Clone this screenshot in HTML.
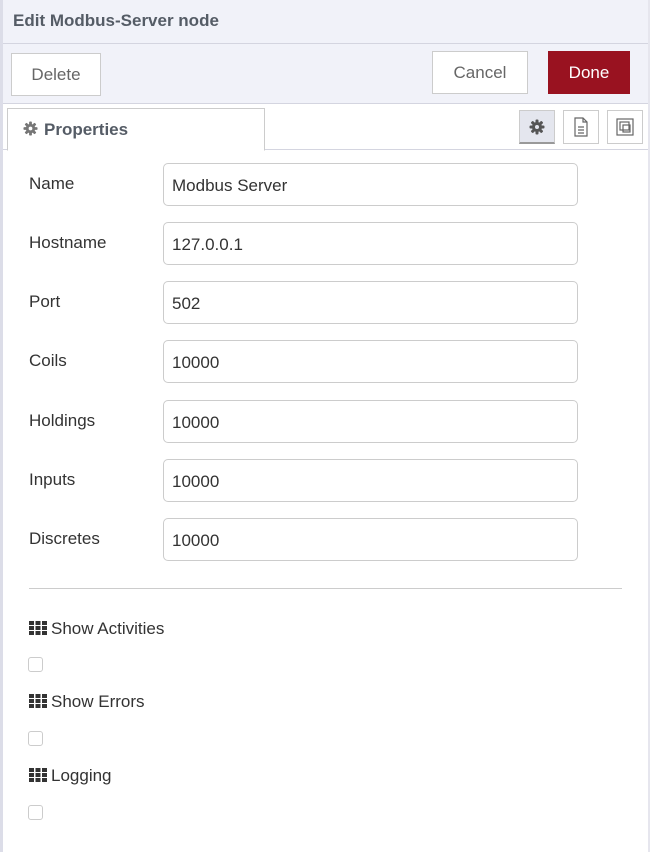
<!DOCTYPE html>
<html><head><style>
*{box-sizing:border-box;margin:0;padding:0}
body{width:650px;height:852px;background:#fff;font-family:"Liberation Sans",sans-serif;color:#333;position:relative;overflow:hidden}
.frame{position:absolute;left:0;top:0;width:650px;height:852px;border-left:3px solid #dcdde8;border-right:2px solid #e6e6ee;z-index:5;pointer-events:none}
.hdr{position:absolute;left:3px;right:2px;top:0;height:44px;background:#f1f2f9;border-bottom:1px solid #d4d5e0;font-weight:bold;font-size:17px;color:#555c66;padding:11px 0 0 10px}
.bar{position:absolute;left:3px;right:2px;top:44px;height:60px;background:#f1f2f9;border-bottom:1px solid #d4d5e0}
.btn{position:absolute;height:43px;border:1px solid #ccc;background:#fff;color:#666;font-size:17px;text-align:center;line-height:41px}
.tabs{position:absolute;left:3px;right:2px;top:104px;height:46px;background:#fff;border-bottom:1px solid #d4d5e0}
.tab{position:absolute;left:7px;top:108px;width:258px;height:43px;border:1px solid #ccc;border-bottom:1px solid #fff;background:#fff;font-weight:bold;font-size:17px;color:#555c66;padding:11px 0 0 15px}
.ib{position:absolute;top:6px;width:36px;height:34px;border:1px solid #ccc;background:#fff}
.lbl{position:absolute;left:29px;font-size:17px;color:#333}
.inp{position:absolute;left:163px;width:415px;height:43px;border:1px solid #ccc;border-radius:5px;font-size:17px;padding:12px 0 0 8px;color:#333}
.hr{position:absolute;left:29px;width:593px;top:588px;border-top:1px solid #ccc}
.cb{position:absolute;left:28px;width:15px;height:15px;border:1px solid #ccc;border-radius:3px}
</style></head><body>
<div class="frame"></div>
<div class="hdr">Edit Modbus-Server node</div>
<div class="bar"></div>
<div class="btn" style="left:11px;top:53px;width:90px">Delete</div>
<div class="btn" style="left:432px;top:51px;width:96px">Cancel</div>
<div class="btn" style="left:548px;top:51px;width:82px;background:#991220;border-color:#991220;color:#fff">Done</div>
<div class="tabs"></div>
<div class="tab"><svg width="15" height="15" viewBox="0 0 16 16" style="vertical-align:-1px;margin-right:6px"><g fill="#777"><circle cx="8" cy="8" r="5"/><rect x="6.5" y="0.5" width="3" height="15" rx="1"/><rect x="0.5" y="6.5" width="15" height="3" rx="1"/><rect x="6.5" y="0.5" width="3" height="15" rx="1" transform="rotate(45 8 8)"/><rect x="6.5" y="0.5" width="3" height="15" rx="1" transform="rotate(-45 8 8)"/></g><circle cx="8" cy="8" r="2" fill="#fff"/></svg>Properties</div>
<div class="ib" style="left:519px;top:110px;background:#e4e6ee;border-bottom:2px solid #999"><svg width="16" height="16" viewBox="0 0 16 16" style="margin:8px 0 0 9px"><g fill="#555"><circle cx="8" cy="8" r="5"/><rect x="6.5" y="0.5" width="3" height="15" rx="1"/><rect x="0.5" y="6.5" width="15" height="3" rx="1"/><rect x="6.5" y="0.5" width="3" height="15" rx="1" transform="rotate(45 8 8)"/><rect x="6.5" y="0.5" width="3" height="15" rx="1" transform="rotate(-45 8 8)"/></g><circle cx="8" cy="8" r="2" fill="#e4e6ee"/></svg></div>
<div class="ib" style="left:563px;top:110px"><svg width="16" height="20" viewBox="0 0 16 20" style="margin:6px 0 0 9px" fill="none" stroke="#666" stroke-width="1.2"><path d="M2 1h8l4 4v14H2z M10 1v4h4 M5 10h6 M5 13h6 M5 16h6"/></svg></div>
<div class="ib" style="left:607px;top:110px"><svg width="22" height="22" viewBox="0 0 22 22" style="margin:5px 0 0 6px" fill="none" stroke="#666" stroke-width="1.2"><rect x="3" y="3" width="16" height="16"/><rect x="6" y="6" width="9" height="8"/><rect x="9" y="9" width="7" height="7"/></svg></div>

<div class="lbl" style="top:174px">Name</div><div class="inp" style="top:163px">Modbus Server</div>
<div class="lbl" style="top:233px">Hostname</div><div class="inp" style="top:222px">127.0.0.1</div>
<div class="lbl" style="top:292px">Port</div><div class="inp" style="top:281px">502</div>
<div class="lbl" style="top:351px">Coils</div><div class="inp" style="top:340px">10000</div>
<div class="lbl" style="top:411px">Holdings</div><div class="inp" style="top:400px">10000</div>
<div class="lbl" style="top:470px">Inputs</div><div class="inp" style="top:459px">10000</div>
<div class="lbl" style="top:529px">Discretes</div><div class="inp" style="top:518px">10000</div>
<div class="hr"></div>

<div class="lbl" style="top:619px"><svg width="18" height="14" viewBox="0 0 18 14" style="vertical-align:-1px;margin-right:4px" fill="#333"><rect x="0" y="0" width="5" height="4"/><rect x="6.5" y="0" width="5" height="4"/><rect x="13" y="0" width="5" height="4"/><rect x="0" y="5" width="5" height="4"/><rect x="6.5" y="5" width="5" height="4"/><rect x="13" y="5" width="5" height="4"/><rect x="0" y="10" width="5" height="4"/><rect x="6.5" y="10" width="5" height="4"/><rect x="13" y="10" width="5" height="4"/></svg>Show Activities</div>
<div class="cb" style="top:657px"></div>
<div class="lbl" style="top:692px"><svg width="18" height="14" viewBox="0 0 18 14" style="vertical-align:-1px;margin-right:4px" fill="#333"><rect x="0" y="0" width="5" height="4"/><rect x="6.5" y="0" width="5" height="4"/><rect x="13" y="0" width="5" height="4"/><rect x="0" y="5" width="5" height="4"/><rect x="6.5" y="5" width="5" height="4"/><rect x="13" y="5" width="5" height="4"/><rect x="0" y="10" width="5" height="4"/><rect x="6.5" y="10" width="5" height="4"/><rect x="13" y="10" width="5" height="4"/></svg>Show Errors</div>
<div class="cb" style="top:731px"></div>
<div class="lbl" style="top:766px"><svg width="18" height="14" viewBox="0 0 18 14" style="vertical-align:-1px;margin-right:4px" fill="#333"><rect x="0" y="0" width="5" height="4"/><rect x="6.5" y="0" width="5" height="4"/><rect x="13" y="0" width="5" height="4"/><rect x="0" y="5" width="5" height="4"/><rect x="6.5" y="5" width="5" height="4"/><rect x="13" y="5" width="5" height="4"/><rect x="0" y="10" width="5" height="4"/><rect x="6.5" y="10" width="5" height="4"/><rect x="13" y="10" width="5" height="4"/></svg>Logging</div>
<div class="cb" style="top:805px"></div>
</body></html>
